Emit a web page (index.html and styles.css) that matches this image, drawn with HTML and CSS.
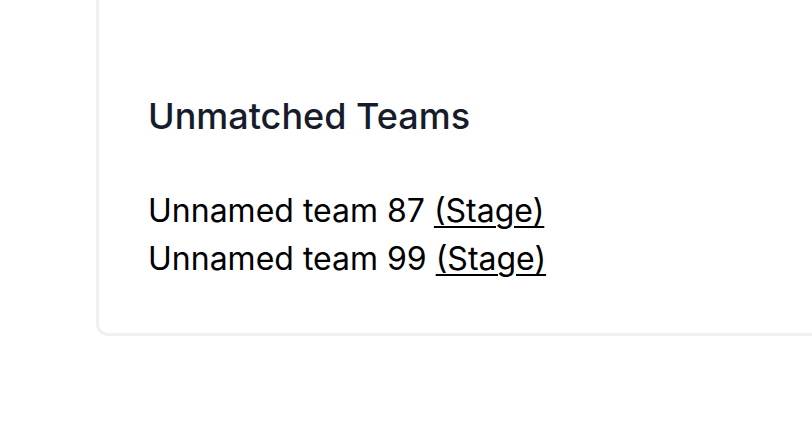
FILE: index.html
```html
<!DOCTYPE html>
<html>
<head>
<meta charset="utf-8">
<link rel="stylesheet" href="styles.css">
</head>
<body>
<div class="page">
  <section class="card">
    <h2 class="title">Unmatched Teams</h2>
    <ul class="teams">
      <li>Unnamed team 87 <a href="#" class="stage">(Stage)</a></li>
      <li>Unnamed team 99 <a href="#" class="stage">(Stage)</a></li>
    </ul>
  </section>
</div>
</body>
</html>
```
FILE: styles.css
```css
html, body {
  margin: 0;
  padding: 0;
  background: #ffffff;
  font-family: Inter, "Noto Sans", sans-serif;
  overflow: hidden;
}
.page {
  padding-left: 96px;
}
.card {
  margin-top: -40px;
  margin-right: -40px;
  border: 3px solid #f0f0f0;
  border-radius: 12px;
  padding: 132px 49px 50px 49px;
}
.title {
  margin: 0;
  font-size: 36px;
  font-weight: 500;
  line-height: 42px;
  color: #171c2b;
}
.teams {
  list-style: none;
  margin: 50px 0 0 0;
  padding: 0;
  font-size: 32px;
  line-height: 48px;
  color: #000;
}
.stage {
  color: #000;
  text-decoration: underline;
  text-decoration-thickness: 2px;
  text-underline-offset: 4px;
}
```
